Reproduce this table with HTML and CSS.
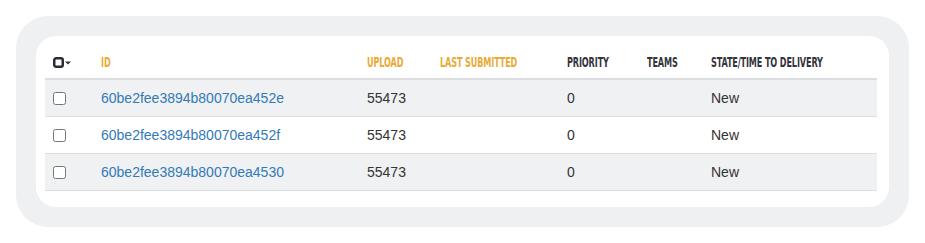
FILE: index.html
```html
<!DOCTYPE html>
<html>
<head>
<meta charset="utf-8">
<link rel="stylesheet" href="styles.css">
</head>
<body>
<div class="frame">
  <div class="card">
    <table class="grid">
      <colgroup>
        <col class="c-check"><col class="c-id"><col class="c-upload"><col class="c-last"><col class="c-prio"><col class="c-teams"><col class="c-state">
      </colgroup>
      <thead>
        <tr>
          <th class="sel">
            <svg class="sel-icon" width="20" height="11" viewBox="0 0 20 11"><rect x="1.25" y="1.25" width="8.5" height="8.5" rx="1.8" fill="none" stroke="#2b2b33" stroke-width="2.5"/><path d="M12 4.5h6l-3 3z" fill="#333"/></svg>
          </th>
          <th class="sort"><span class="hd">ID</span></th>
          <th class="sort"><span class="hd">Upload</span></th>
          <th class="sort"><span class="hd">Last submitted</span></th>
          <th><span class="hd">Priority</span></th>
          <th><span class="hd">Teams</span></th>
          <th><span class="hd">State/Time to delivery</span></th>
        </tr>
      </thead>
      <tbody>
        <tr class="odd">
          <td><input type="checkbox" class="box"></td>
          <td><a href="#" class="link">60be2fee3894b80070ea452e</a></td>
          <td>55473</td><td></td><td>0</td><td></td><td>New</td>
        </tr>
        <tr>
          <td><input type="checkbox" class="box"></td>
          <td><a href="#" class="link">60be2fee3894b80070ea452f</a></td>
          <td>55473</td><td></td><td>0</td><td></td><td>New</td>
        </tr>
        <tr class="odd">
          <td><input type="checkbox" class="box"></td>
          <td><a href="#" class="link">60be2fee3894b80070ea4530</a></td>
          <td>55473</td><td></td><td>0</td><td></td><td>New</td>
        </tr>
      </tbody>
    </table>
  </div>
</div>
</body>
</html>
```
FILE: styles.css
```css
html, body { margin: 0; padding: 0; background: #fff; }
body { font-family: "Liberation Sans", Arial, sans-serif; font-size: 14px; color: #333; }

.frame {
  margin: 16px;
  width: 893px;
  height: 211px;
  box-sizing: border-box;
  padding: 20px;
  background: #eff0f2;
  border-radius: 32px;
}
.card {
  background: #fff;
  border-radius: 20px;
  height: 171px;
  box-sizing: border-box;
  padding: 9px 12px 16px 9px;
}
.grid {
  width: 832px;
  table-layout: fixed;
  border-collapse: collapse;
  border-spacing: 0;
}
.c-check { width: 48px; }
.c-id { width: 266px; }
.c-upload { width: 73px; }
.c-last { width: 127px; }
.c-prio { width: 80px; }
.c-teams { width: 64px; }
.c-state { width: 174px; }

.grid th {
  font-family: "DejaVu Sans Condensed", "DejaVu Sans", sans-serif;
  font-stretch: condensed;
  font-weight: bold;
  text-transform: uppercase;
  font-size: 14px;
  color: #34343c;
  text-align: left;
  height: 32px;
  padding: 0 8px;
  vertical-align: middle;
  border-bottom: 2px solid #dcdde0;
  white-space: nowrap;
  overflow: visible;
}
.hd {
  display: inline-block;
  transform: scaleX(0.645);
  transform-origin: 0 50%;
  letter-spacing: -0.2px;
}
.grid th.sort { color: #eaaa36; }
.grid th.sel { padding-top: 1px; }
.sel-icon { display: block; }

.grid td {
  height: 36px;
  padding: 0 8px;
  vertical-align: middle;
  border-bottom: 1px solid #dcdde0;
  line-height: 20px;
}
.grid tr.odd td { background: #f0f1f3; }
.box { margin: 0; width: 13px; height: 13px; display: block; }
.link { color: #337ab7; text-decoration: none; }
```
